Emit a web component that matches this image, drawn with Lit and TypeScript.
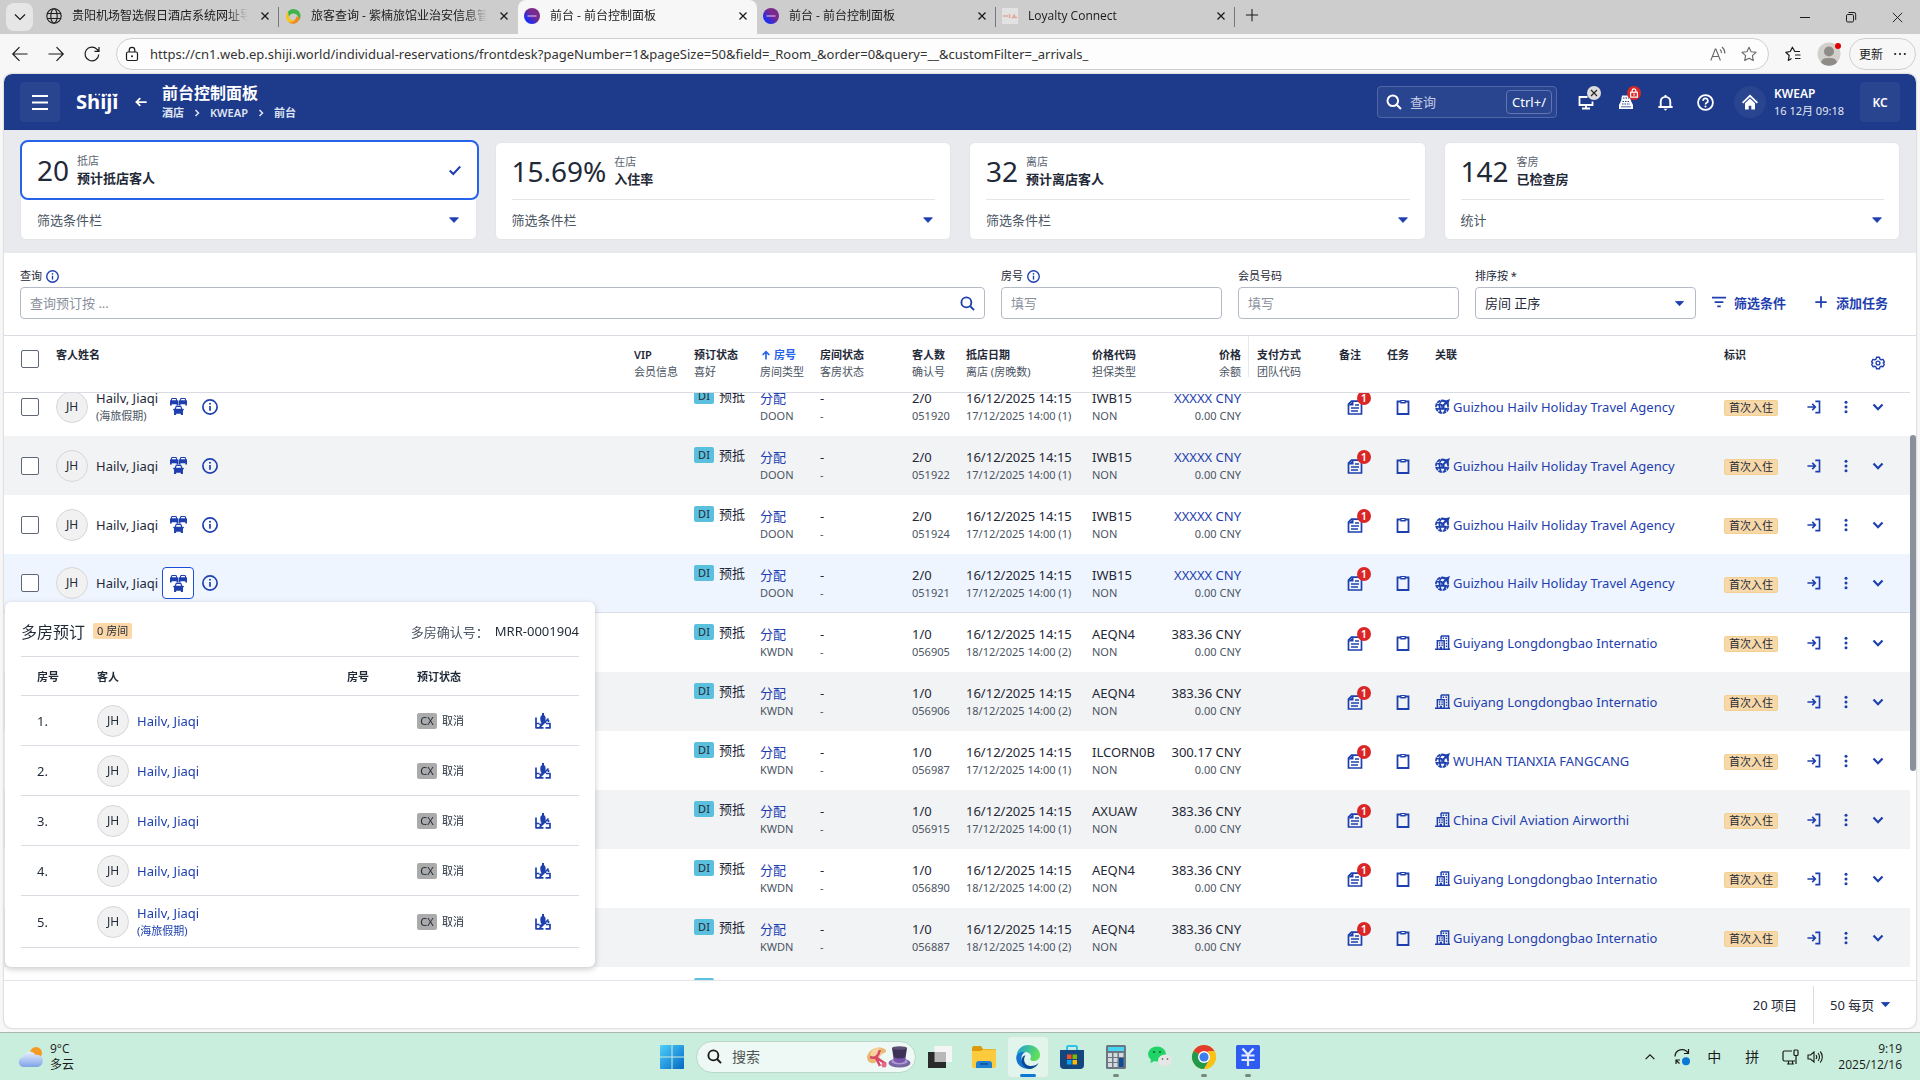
import { LitElement, html, css, svg, nothing, type TemplateResult } from "lit";
import { customElement, property, query } from "lit/decorators.js";
import { classMap } from "lit/directives/class-map.js";

const glyphs: Record<string, TemplateResult> = {
  chevron: svg`<path d="M3 5.5 8 10.5 13 5.5" fill="none" stroke="currentColor" stroke-width="1.2"/>`,
  chevronBold: svg`<path d="M3.5 5.5 8 10.2 12.5 5.5" fill="none" stroke="currentColor" stroke-width="2.2"/>`,
  crumb: svg`<path d="M6 4 10 8 6 12" fill="none" stroke="currentColor" stroke-width="2"/>`,
  globe: svg`<g fill="none" stroke="currentColor" stroke-width="1.1"><circle cx="8" cy="8" r="7.2"/><ellipse cx="8" cy="8" rx="3.2" ry="7.2"/><path d="M1.4 5.5h13.2M1.4 10.5h13.2"/></g>`,
  swirl: svg`<path d="M3.500 3A7.200 7.200 0 0 1 15.500 7c.2 2-.4 4-1.500 5.500C14 9 12 5.500 8.500 5.500 6 5.500 4.500 7 4.200 9 2.500 7 2.500 5 3.500 3Z" fill="#3db54a"/><path d="M14.500 9c0 4-3 6.800-6.500 6.800-2 0-3.500-.8-4.800-2 4 .8 7.300-1 8.300-5.300z" fill="#f08a1c"/><path d="M2.800 3.500C.2 6.500.2 11 3.200 13.800c2.500.9 5 .4 6.500-1.300C6.500 12.500 3.500 10 3.500 7c0-1.500-.3-2.500-.7-3.500Z" fill="#f6c524"/>`,
  shijiDot: svg`<defs><linearGradient id="sd" x1="0" y1="1" x2="1" y2="0"><stop offset=".2" stop-color="#1b2df5"/><stop offset=".6" stop-color="#7a2a8c"/></linearGradient></defs><circle cx="8" cy="8" r="8" fill="url(#sd)"/><path d="M3.500 8h9" stroke="#c9a8e0" stroke-width="1.300"/>`,
  loyalty: svg`<rect width="16" height="16" fill="#e2e2e2"/><path d="M1 8h5M7.500 6v4M9.500 9.500h2l.5-3 1 3h2" stroke="#e58b80" stroke-width="1.500" fill="none" opacity=".7"/>`,
  close: svg`<path d="M4 4l8 8M12 4l-8 8" stroke="currentColor" stroke-width="1.500"/>`,
  closeThin: svg`<path d="M3 3l10 10M13 3 3 13" stroke="currentColor" stroke-width="1"/>`,
  plusThin: svg`<path d="M8 1v14M1 8h14" stroke="currentColor" stroke-width="1.200"/>`,
  plus: svg`<path d="M8 1.500v13M1.500 8h13" stroke="currentColor" stroke-width="2"/>`,
  minimize: svg`<path d="M3 8.500h10" stroke="currentColor" stroke-width="1"/>`,
  restore: svg`<g fill="none" stroke="currentColor" stroke-width="1"><rect x="3.500" y="5.500" width="7" height="7.500" rx="1.200"/><path d="M5.500 3.500H11a1.700 1.700 0 0 1 1.700 1.700V11"/></g>`,
  back: svg`<path d="M15.500 8H1M7.500 1.200 .8 8l6.700 6.800" fill="none" stroke="currentColor" stroke-width="1.200"/>`,
  forward: svg`<path d="M.5 8H15M8.500 1.200 15.200 8l-6.700 6.800" fill="none" stroke="currentColor" stroke-width="1.200"/>`,
  reload: svg`<path d="M14.800 8.500A6.900 6.900 0 1 1 13 3.300L15 5.200M15 1v4.400h-4.500" fill="none" stroke="currentColor" stroke-width="1.200"/>`,
  lock: svg`<g fill="none" stroke="currentColor" stroke-width="1.200"><rect x="2.500" y="6" width="11" height="8.500" rx="1.500"/><path d="M5.200 6V4.200a2.800 2.800 0 0 1 5.600 0V6"/></g><circle cx="8" cy="10.200" r="1" fill="currentColor"/>`,
  readAloud: svg`<g fill="none" stroke="currentColor" stroke-width="1.100"><path d="M.8 14.500 5.300 3h.6l4.500 11.500M2.500 10.500h6.200M10 3.500c1 .8 1.500 2 1.500 3.500M12 1c1.800 1.500 2.900 4 2.900 6.500"/></g>`,
  star: svg`<path d="M8 1.200l2.100 4.500 4.900.6-3.600 3.400.9 4.900L8 12.200l-4.300 2.400.9-4.900L1 6.300l4.900-.6z" fill="none" stroke="currentColor" stroke-width="1.100" stroke-linejoin="round"/>`,
  favs: svg`<path d="M15 5.500H9.800L7.400 1.200 5.300 5.500.8 6.300l3.400 3.200-.9 4.900 3.200-1.800M10 9h5.500M10 12.500h5.500" fill="none" stroke="currentColor" stroke-width="1.200" stroke-linejoin="round"/>`,
  dots: svg`<g fill="currentColor"><circle cx="2.500" cy="8" r="1.200"/><circle cx="8" cy="8" r="1.200"/><circle cx="13.500" cy="8" r="1.200"/></g>`,
  kebab: svg`<g fill="currentColor"><circle cx="8" cy="1.800" r="2"/><circle cx="8" cy="8" r="2"/><circle cx="8" cy="14.200" r="2"/></g>`,
  menu: svg`<path d="M0 2h16M0 8.500h16M0 15h16" stroke="currentColor" stroke-width="2"/>`,
  arrowLeft: svg`<path d="M14.500 8H3M7.200 3.500 2.700 8l4.500 4.500" fill="none" stroke="currentColor" stroke-width="2"/>`,
  arrowUp: svg`<path d="M8 14V4M3.500 8 8 3.500 12.500 8" fill="none" stroke="currentColor" stroke-width="2.200"/>`,
  search: svg`<g fill="none" stroke="currentColor" stroke-width="2"><circle cx="6.800" cy="6.800" r="5.300"/><path d="M10.700 10.700 15 15"/></g>`,
  monitor: svg`<path d="M9.500 3H1.500v8h13V7.500M8 11v3M4 14.500h8" fill="none" stroke="currentColor" stroke-width="1.800"/>`,
  register: svg`<path d="M4 1.500h8l.8 5L15 11v4H1v-4l2.200-4.500z" fill="currentColor"/><path d="M5 4h6M4.500 7.500h7M4 10h8" stroke="#1e3a8a" stroke-width="1.200" stroke-dasharray="1.500 1"/><path d="M3 12.800h10" stroke="#1e3a8a" stroke-width=".8"/>`,
  bell: svg`<path d="M8 1v1.500M3.500 12V7.200a4.500 4.500 0 0 1 9 0V12M1.300 12.200h13.400" fill="none" stroke="currentColor" stroke-width="1.800"/><path d="M6.200 13.800h3.600L8 15.800z" fill="currentColor"/>`,
  help: svg`<circle cx="8" cy="8" r="7" fill="none" stroke="currentColor" stroke-width="1.700"/><path d="M5.800 6.500A2.200 2.200 0 1 1 9 8.300c-.7.400-1 .7-1 1.500" fill="none" stroke="currentColor" stroke-width="1.600"/><circle cx="8" cy="11.800" r="1" fill="currentColor"/>`,
  home: svg`<path d="M8 .5 0 8.300l1.200 1.200L8 3l6.800 6.500L16 8.300zM3 9.300V15.500h3.700v-3.800h2.600v3.800H13V9.300L8 4.600z" fill="currentColor"/>`,
  badgeLock: svg`<g fill="none" stroke="#fff" stroke-width="1.600"><rect x="3.500" y="7" width="9" height="6.500"/><path d="M5.500 7V5a2.500 2.500 0 0 1 5 0v2"/></g><path d="M8 8.500v3" stroke="#fff" stroke-width="1.600"/>`,
  check: svg`<path d="M2 8.500 6 12.500 14 4" fill="none" stroke="currentColor" stroke-width="2.300"/>`,
  caret: svg`<path d="M3 5.500h10L8 10.800z" fill="currentColor" stroke="currentColor" stroke-width="1"/>`,
  info: svg`<circle cx="8" cy="8" r="7.100" fill="none" stroke="currentColor" stroke-width="1.700"/><path d="M8 7v4.800" stroke="currentColor" stroke-width="1.700"/><circle cx="8" cy="4.800" r="1" fill="currentColor"/>`,
  filter: svg`<path d="M0 3h16M3 8h10M6 13h4" stroke="currentColor" stroke-width="2"/>`,
  gear: svg`<path d="M6.300 1.500h3.400l.5 2 1.500.9 2-.6 1.600 2.900-1.400 1.300 1.400 1.400-1.600 2.900-2-.6-1.500.9-.5 2H6.300l-.5-2-1.500-.9-2 .6L.7 9.400 2.100 8 .7 6.700l1.600-2.900 2 .6 1.500-.9z" fill="none" stroke="currentColor" stroke-width="1.600" stroke-linejoin="round"/><circle cx="8" cy="8" r="2.200" fill="none" stroke="currentColor" stroke-width="1.500"/>`,
  group: svg`<g fill="currentColor"><path d="M1.500 0h4.500l.9 2 .9.700V7H6.200V5.800H1.600V7H0V2.700L.6 2z"/><path d="M10 0h4.500l.9 2 .6.700V7h-1.600V5.800H9.800V7H8.200V2.700l.9-.7z"/><path d="M5.500 7.300h5l1.100 2.700 1.400.3v1l-.8.5V16h-2v-1.200H5.800V16h-2v-4.200L3 11.300v-1L4.400 10z"/></g><g fill="#fff"><path d="M2.200 1h3.100l.5 1.200H1.700zM10.700 1h3.100l.5 1.200h-4.100zM6.200 8.400h3.600l.6 1.600H5.600z"/></g>`,
  notes: svg`<path d="M4.500 2.200H14.500V15H1.500V5.200z" fill="none" stroke="currentColor" stroke-width="1.700"/><path d="M1 6.500h5.500V2z" fill="currentColor"/><path d="M4 9h8M4 12h7M8 6h4" stroke="currentColor" stroke-width="1.400"/>`,
  clipboard: svg`<path d="M2.500 2.500h11v12.500h-11z" fill="none" stroke="currentColor" stroke-width="1.800"/><path d="M5.300 1h5.400v3.500H5.300z" fill="currentColor"/><path d="M6.500 2.500h3" stroke="#fff" stroke-width="1"/>`,
  agency: svg`<g fill="none" stroke="currentColor"><path d="M10.500 2A6.800 6.800 0 1 0 14.500 9.500" stroke-width="1.800" stroke-dasharray="4 .8"/><path d="M7 2C4 4 3.800 10 6.500 14.500M1.500 6.200h6M1.500 10.500h12M9.500 14.500c1.300-1.300 1.800-3 2-5M6 8.500h4" stroke-width="1.700"/></g><path d="M16 0l-1.300 3.700 .2 5-1.400.9-1.400-4.200-2.200 2.100.1 2.300-1.200.6-1-2.400-2.300-1 .8-1.200 2.100.1 2.100-2.200-4.200-1.400.9-1.300 5 .2z" fill="currentColor"/>`,
  company: svg`<path d="M6.500 1h8V15M6.500 1v4M2.500 15V6h7.300v9M0 15.200h16" fill="none" stroke="currentColor" stroke-width="1.600"/><path d="M4.200 8.500h1.500M6.800 8.500h1.500M4.200 11h1.500M6.800 11h1.500M8.200 3.500h1.500M11 3.500h1.700M11.500 6.200h1.500M11.500 9h1.500M11.500 12h1.500" stroke="currentColor" stroke-width="1.500" fill="none"/><path d="M5 12.500h2.500V15H5z" fill="currentColor"/>`,
  checkIn: svg`<path d="M9.500 1.500h4.800v13H9.500M.5 8h9M6 4.500 9.500 8 6 11.500" fill="none" stroke="currentColor" stroke-width="1.900"/>`,
  restoreGuest: svg`<path d="M7 0h2v2.500h.8c1 1.500 1 3.500.5 5.500L8.500 11 6 9.500C5 6.500 5 4.500 6 2.500h1z" fill="currentColor"/><path d="M1 4.500v11M1 10.500h3.500M1 14.800h7.500M13.500 5.500 4.500 14.500M10.500 14.800 15.500 14.800M11 10.500h4v5M4.500 12l6.500-3M13.500 7v2" stroke="currentColor" stroke-width="1.700" fill="none"/>`,
  trayUp: svg`<path d="M3 10.500 8 5.500 13 10.500" fill="none" stroke="currentColor" stroke-width="1.400"/>`,
  sync: svg`<path d="M1 7.500A7 7 0 0 1 14 4M14.500 0v4.500H10M2 15v-4h4M2.200 11.500 5.500 14.500" fill="none" stroke="currentColor" stroke-width="1.200"/><circle cx="12" cy="12.200" r="4" fill="#0a78d4"/>`,
  network: svg`<path d="M10 2H2.500A1.500 1.500 0 0 0 1 3.500v7A1.500 1.500 0 0 0 2.500 12H13M5 15h7M6.500 12v3M10.500 12v3M14 7v8" fill="none" stroke="currentColor" stroke-width="1.200"/><rect x="12" y="1" width="4" height="5.500" rx="1" fill="none" stroke="currentColor" stroke-width="1.200"/>`,
  volume: svg`<path d="M1 6h2.500L7 3v10L3.500 10H1zM9 6c.8 1 .8 3 0 4M11 4.200c2 2 2 5.600 0 7.600M13.200 2.500c2.800 3 2.800 8 0 11" fill="none" stroke="currentColor" stroke-width="1.100"/>`,
};

const icon = (name: string, size = 16) =>
  html`<svg class="icon" width=${size} height=${size} viewBox="0 0 16 16" aria-hidden="true">${glyphs[name]}</svg>`;

const shared = css`
  :host { box-sizing: border-box; }
  *, *::before, *::after { box-sizing: border-box; }
  button, input, select { font: inherit; color: inherit; }
  button { border: 0; background: none; padding: 0; margin: 0; display: inline-flex; align-items: center; justify-content: center; cursor: pointer; }
  a { text-decoration: none; color: inherit; }
  .icon { display: block; flex: none; overflow: visible; }
`;

interface Tab { icon: string; title: string; active?: boolean; divider?: boolean }
const tabs: Tab[] = [
  { icon: "globe", title: "贵阳机场智选假日酒店系统网址导航", divider: true },
  { icon: "swirl", title: "旅客查询 - 紫楠旅馆业治安信息管理" },
  { icon: "shijiDot", title: "前台 - 前台控制面板", active: true },
  { icon: "shijiDot", title: "前台 - 前台控制面板", divider: true },
  { icon: "loyalty", title: "Loyalty Connect", divider: true },
];

@customElement("browser-bar")
class BrowserBar extends LitElement {
  static styles = [shared, css`
    :host { display: block; color: #1b1b1b; font-family: "Open Sans", "Noto Sans CJK SC", sans-serif; }
    .tabs { display: flex; height: 34px; background: #cdcdcd; padding-left: 6px; }
    .tablist { width: 27px; height: 28px; margin: 3px 7px 0 0; border-radius: 8px; background: #e6e6e6; }
    .tab { width: 239px; display: flex; align-items: center; gap: 10px; padding: 0 7px 8px 6px; font-size: 12px; line-height: 18px; position: relative; padding-top: 6px; }
    .tab.active { background: #f7f7f7; border-radius: 8px 8px 0 0; }
    .tab.divider::after { content: ""; position: absolute; right: 0; top: 7px; height: 20px; width: 1px; background: #777; }
    .title { flex: 1; white-space: nowrap; overflow: hidden; mask-image: linear-gradient(90deg, #000 88%, transparent); }
    .add { width: 34px; height: 30px; }
    .window { margin-left: auto; display: flex; }
    .window button { width: 46px; height: 34px; }
    .tools { display: flex; align-items: center; height: 40px; background: #f7f7f7; padding: 0 4px 0 2px; }
    .nav { width: 36px; height: 32px; }
    .address { flex: 1; display: flex; align-items: center; height: 32px; margin-left: 6px; border: 1px solid #cfcfcf; border-radius: 16px; background: #fdfdfd; padding: 0 8px 0 7px; gap: 10px; }
    .url { flex: 1; min-width: 0; border: 0; background: none; outline: 0; padding: 0; font-family: "Noto Sans", sans-serif; font-size: 13px; color: #333; }
    .grey { color: #666; }
    .address button { width: 21px; }
    .fav { width: 48px; height: 32px; }
    .avatar { width: 24px; height: 24px; }
    .update { height: 32px; margin-left: 8px; border: 1px solid #cfcfcf; border-radius: 16px; gap: 10px; padding: 0 8px 0 9px; font-size: 12px; }
  `];

  render() {
    return html`
      <div class="tabs" role="tablist">
        <button class="tablist" aria-label="标签页">${icon("chevron", 16)}</button>
        ${tabs.map((t) => html`
          <div class=${classMap({ tab: true, active: !!t.active, divider: !!t.divider })} role="tab">
            ${icon(t.icon)}<span class="title">${t.title}</span>
            <button aria-label="关闭">${icon("close", 14)}</button>
          </div>`)}
        <button class="add" aria-label="新建">${icon("plusThin", 14)}</button>
        <div class="window">
          <button aria-label="最小化">${icon("minimize")}</button>
          <button aria-label="还原">${icon("restore")}</button>
          <button aria-label="关闭">${icon("closeThin", 15)}</button>
        </div>
      </div>
      <div class="tools">
        <button class="nav" aria-label="后退">${icon("back")}</button>
        <button class="nav" aria-label="前进">${icon("forward")}</button>
        <button class="nav" aria-label="刷新">${icon("reload")}</button>
        <div class="address">
          ${icon("lock")}
          <input class="url" aria-label="地址" value="https://cn1.web.ep.shiji.world/individual-reservations/frontdesk?pageNumber=1&pageSize=50&field=_Room_&order=0&query=__&customFilter=_arrivals_" />
          <button class="grey" aria-label="朗读">${icon("readAloud")}</button>
          <button class="grey" aria-label="收藏">${icon("star")}</button>
        </div>
        <button class="fav" aria-label="收藏夹">${icon("favs")}</button>
        <button aria-label="用户"><svg class="icon avatar" viewBox="0 0 24 24"><circle cx="12" cy="12" r="11.500" fill="#d2d0cd"/><circle cx="12" cy="9.500" r="5" fill="#8f8b87"/><path d="M4 20.500c1-4 4-4.500 8-4.500s7 .5 8 4.500a11.500 11.500 0 0 1-16 0z" fill="#8f8b87"/><circle cx="21" cy="4" r="3" fill="#e00000"/></svg></button>
        <button class="update">更新 ${icon("dots", 14)}</button>
      </div>`;
  }
}

@customElement("app-header")
class AppHeader extends LitElement {
  static styles = [shared, css`
    :host { display: flex; align-items: center; height: 56px; padding: 0 16px; background: #1e3a8a; color: #fff; border-radius: 8px 8px 0 0; }
    .tile { width: 40px; height: 40px; border-radius: 4px; background: #2a4590; font-size: 12px; font-weight: 600; }
    .logo { margin: 0 16px 0 16px; width: 42px; position: relative; font: 700 20px/40px "Open Sans", sans-serif; }
    .logodots { position: absolute; left: 18px; top: 11px; }
    .titles { margin-left: 14px; display: flex; flex-direction: column; gap: 2px; }
    h1 { margin: 0; font-size: 16px; line-height: 20px; font-weight: 700; }
    .crumbs { display: flex; align-items: center; gap: 7px; font-size: 11px; line-height: 16px; font-weight: 600; color: #dfe5f4; }
    .search { margin-left: auto; display: flex; align-items: center; gap: 8px; width: 180px; height: 32px; border: 1px solid #5068a8; border-radius: 4px; background: #2a4590; padding: 0 4px 0 8px; }
    .search input { flex: 1; min-width: 0; border: 0; background: none; outline: 0; padding: 0; font-size: 13px; }
    .search input::placeholder { color: #c3cce4; }
    .key { height: 24px; border: 1px solid #5f76b0; border-radius: 4px; padding: 0 5px; font-size: 13px; line-height: 22px; }
    .actions { display: flex; margin-left: 9px; }
    .actions button { width: 40px; height: 40px; position: relative; }
    .badge { position: absolute; right: 5px; top: 4px; width: 14px; height: 14px; border-radius: 50%; display: grid; place-items: center; background: #dcdcdc; color: #222; }
    .badge.red { background: #dc2626; }
    .home { width: 32px; height: 32px; border-radius: 50%; background: #2a4590; display: grid; place-items: center; margin: 0 8px; }
    .who { margin-right: 16px; display: flex; flex-direction: column; gap: 1px; }
    .hotel { font-size: 12px; line-height: 17px; font-weight: 600; }
    .date { font-size: 11px; line-height: 16px; color: #e2e7f4; }
  `];

  render() {
    return html`
      <button class="tile" aria-label="菜单">${icon("menu")}</button>
      <div class="logo">Shiji<svg class="icon logodots" width="26" height="3" viewBox="0 0 26 3"><path d="M1 1.500h24" stroke="#fff" stroke-width="1.500" stroke-dasharray="1.500 2"/></svg></div>
      <button aria-label="返回">${icon("arrowLeft", 14)}</button>
      <div class="titles">
        <h1>前台控制面板</h1>
        <nav class="crumbs"><a href="#">酒店</a>${icon("crumb", 12)}<a href="#">KWEAP</a>${icon("crumb", 12)}<a href="#">前台</a></nav>
      </div>
      <label class="search">${icon("search", 16)}<input type="search" placeholder="查询" aria-label="查询" /><span class="key">Ctrl+/</span></label>
      <div class="actions">
        <button aria-label="连接">${icon("monitor")}<span class="badge">${icon("close", 12)}</span></button>
        <button aria-label="收银">${icon("register")}<span class="badge red">${icon("badgeLock", 12)}</span></button>
        <button aria-label="通知">${icon("bell", 17)}</button>
        <button aria-label="帮助">${icon("help", 17)}</button>
      </div>
      <span class="home">${icon("home")}</span>
      <div class="who"><span class="hotel">KWEAP</span><span class="date">16 12月 09:18</span></div>
      <button class="tile">KC</button>`;
  }
}

@customElement("stat-card")
class StatCard extends LitElement {
  @property() value = "";
  @property() over = "";
  @property() label = "";
  @property() foot = "";
  @property({ type: Boolean }) selected = false;

  static styles = [shared, css`
    :host { display: block; background: #fff; border: 1px solid #e4e5e9; border-radius: 6px; color: #1f2937; }
    .top { width: 100%; height: 56px; padding: 0 16px; justify-content: flex-start; gap: 8px; text-align: left; }
    .top.selected { width: calc(100% + 4px); height: 60px; margin: -3px -3px -1px -1px; padding: 0 15px; border: 2px solid #2563eb; border-radius: 8px; background: #fff; position: relative; }
    .value { font-size: 28px; line-height: 38px; font-weight: 400; }
    .names { display: flex; flex-direction: column; flex: 1; }
    .over { font-size: 11px; line-height: 16px; color: #5b6472; }
    .label { font-size: 13px; line-height: 18px; font-weight: 600; }
    .foot { width: calc(100% - 31px); height: 40px; margin: 0 15px 0 16px; justify-content: space-between; border-top: 1px solid #e4e5e9; font-size: 13px; color: #4b5563; }
    .foot.selected { border-color: transparent; }
    .icon { color: #1e40af; }
  `];

  render() {
    const s = this.selected;
    return html`
      <button class=${classMap({ top: true, selected: s })}>
        <span class="value">${this.value}</span>
        <span class="names"><span class="over">${this.over}</span><span class="label">${this.label}</span></span>
        ${s ? icon("check", 14) : nothing}
      </button>
      <button class=${classMap({ foot: true, selected: s })}>${this.foot}${icon("caret", 14)}</button>`;
  }
}

interface Row { conf: string; guests: string; room: string; rate: string; price: string; nights: number; partner: string; agency: boolean; sub?: string; named?: boolean; hover?: boolean }
const AGENCY = "Guizhou Hailv Holiday Travel Agency";
const HOTEL = "Guiyang Longdongbao Internatio";
const hailv = (conf: string, extra: Partial<Row> = {}): Row => ({ conf, guests: "2/0", room: "DOON", rate: "IWB15", price: "XXXXX CNY", nights: 1, partner: AGENCY, agency: true, named: true, ...extra });
const kwdn = (conf: string, extra: Partial<Row> = {}): Row => ({ conf, guests: "1/0", room: "KWDN", rate: "AEQN4", price: "383.36 CNY", nights: 2, partner: HOTEL, agency: false, ...extra });
const rows: Row[] = [
  hailv("051920", { sub: "(海旅假期)" }),
  hailv("051922"),
  hailv("051924"),
  hailv("051921", { hover: true }),
  kwdn("056905"),
  kwdn("056906"),
  kwdn("056987", { rate: "ILCORN0B", price: "300.17 CNY", nights: 1, partner: "WUHAN TIANXIA FANGCANG", agency: true }),
  kwdn("056915", { rate: "AXUAW", nights: 1, partner: "China Civil Aviation Airworthi" }),
  kwdn("056890"),
  kwdn("056887"),
  kwdn("056888"),
];

@customElement("reservation-table")
class ReservationTable extends LitElement {
  @query(".scroller") scroller!: HTMLElement;

  firstUpdated() {
    this.scroller.scrollTop = 16;
  }

  static styles = [shared, css`
    :host { display: block; position: relative; min-height: 0; flex: 1; border-top: 1px solid #d9dce3; color: #1f2937; }
    .scroller { height: 100%; overflow: hidden; margin-right: 6px; }
    .thumb { position: absolute; right: 0; top: 99px; width: 6px; height: 336px; border-radius: 3px; background: #8a909c; }
    table { border-collapse: separate; border-spacing: 0; width: 100%; }
    .grid { table-layout: fixed; }
    .c-check { width: 44px; } .c-vip { width: 60px; } .c-status { width: 66px; } .c-room { width: 60px; } .c-rs { width: 92px; }
    .c-guests { width: 54px; } .c-date { width: 126px; } .c-rate { width: 76px; } .c-price { width: 89px; } .c-pay { width: 82px; }
    .c-ic { width: 48px; } .c-rel { width: 289px; } .c-tag { width: 82px; } .c-act { width: 112px; }
    .grid > thead > tr > th { position: sticky; top: 0; z-index: 1; height: 57px; background: #fff; border-bottom: 1px solid #d9dce3; font-size: 11px; line-height: 17px; text-align: left; vertical-align: top; padding: 10px 8px 0; font-weight: 400; color: #4b5563; white-space: nowrap; }
    th strong { display: block; font-weight: 600; color: #1f2937; }
    th .sorted { color: #2563eb; display: flex; align-items: center; gap: 2px; }
    .grid > thead > tr > th.price::after { content: ""; position: absolute; right: 0; top: 0; height: 41px; width: 1px; background: #e8eaee; }
    .grid > tbody > tr > td { height: 59px; padding: 11px 8px 0; vertical-align: top; font-size: 13px; line-height: 20px; white-space: nowrap; }
    .grid > tbody > tr > td.mid { padding-top: 0; padding-bottom: 0; vertical-align: middle; }
    .grid > thead > tr > th.all { padding: 14px 0 0 8px; }
    .grid > thead > tr > th.set { padding: 20px 8px 0; }
    tr.even > td { background: #f2f3f5; }
    tr.hover > td { background: #eef5ff; border-bottom: 1px solid #d9dee8; }
    small { display: block; font-size: 11px; line-height: 16px; color: #4b5563; }
    .price { text-align: right !important; }
    input[type="checkbox"] { appearance: none; display: block; width: 18px; height: 18px; margin: 0 0 0 9px; border: 1px solid #5f6776; border-radius: 2px; background: #fff; }
    .guest { display: flex; align-items: center; }
    .face { width: 32px; height: 32px; border-radius: 50%; border: 1px solid #d6d7da; background: #f1f1f2; display: grid; place-items: center; font-size: 12px; line-height: 18px; margin-right: 8px; flex: none; }
    .who { line-height: 18px; }
    .who small { line-height: 18px; }
    .btn { width: 32px; height: 32px; border: 1px solid transparent; border-radius: 4px; color: #1e40af; }
    .btn.on { border-color: #1d4ed8; background: #fff; }
    .guest .btn:first-of-type { margin-left: 4px; }
    .state { display: flex; gap: 5px; }
    .code { height: 16px; padding: 0 4px; border-radius: 2px; background: #5bc0de; font-size: 11px; line-height: 16px; min-width: 20px; text-align: center; }
    .state span:last-child { line-height: 16px; }
    .code.grey { background: #ababab; padding: 0 3px; }
    .link { color: #1e40af; }
    .rel { display: flex; align-items: center; gap: 3px; color: #1e40af; }
    .iconcell { position: relative; width: 18px; color: #1e40af; margin-left: 8px; }
    .count { position: absolute; left: 10px; top: -8px; width: 14px; height: 14px; border-radius: 50%; background: #dc2626; color: #fff; font-size: 11px; line-height: 14px; font-weight: 600; text-align: center; }
    .mark { display: inline-block; height: 16px; padding: 0 4px; border: 1px solid #f4cf92; border-radius: 2px; background: #f7d9a9; font-size: 11px; line-height: 14px; vertical-align: middle; }
    .acts { display: flex; }
    .acts .btn { margin-left: -8px; margin-right: 8px; }
    .cog { width: 32px; margin-left: 56px; color: #1e40af; }

    .popover { position: absolute; left: 1px; top: 266px; width: 590px; height: 365px; z-index: 2; padding: 4px 16px; background: #fff; border-radius: 6px; box-shadow: 0 2px 6px rgba(0, 0, 0, .22); }
    .phead { display: flex; align-items: center; height: 50px; font-size: 13px; color: #4b5563; }
    .phead h2 { margin: 0 8px 0 0; font-size: 16px; font-weight: 400; color: #1f2937; }
    .phead b { font-weight: 400; color: #1f2937; margin-left: 6px; }
    .zero { height: 16px; padding: 0 4px; background: #fdd7a8; border-radius: 2px; font-size: 11px; line-height: 16px; color: #1f2937; margin-right: auto; }
    .rooms { table-layout: fixed; }
    .rooms th { height: 40px; border-top: 1px solid #d9dce3; border-bottom: 1px solid #d9dce3; text-align: left; font-size: 11px; font-weight: 600; padding: 0; }
    .rooms td { height: 50px; border-bottom: 1px solid #d9dce3; padding: 0; font-size: 13px; vertical-align: middle; }
    .rooms th:first-child, .rooms td:first-child { padding-left: 16px; }
    .rooms tr:last-child td { height: 52px; }
    .rooms .state { align-items: center; font-size: 11px; }
    .rooms small { color: inherit; }
    .rooms button { display: flex; }
    .p1 { width: 76px; } .p3 { width: 70px; } .p4 { width: 118px; } .p5 { width: 44px; }
  `];

  private row(r: Row, i: number) {
    return html`<tr class=${classMap({ even: i % 2 === 1 && !r.hover, hover: !!r.hover })}>
      <td class="mid"><input type="checkbox" aria-label="选择 ${r.conf}" /></td>
      <td class="mid">${r.named ? html`<div class="guest"><span class="face">JH</span>
        <span class="who">Hailv, Jiaqi${r.sub ? html`<small>${r.sub}</small>` : nothing}</span>
        <button class=${classMap({ btn: true, on: !!r.hover })} aria-label="多房预订">${icon("group", 17)}</button>
        <button class="btn" aria-label="详情">${icon("info")}</button></div>` : nothing}</td>
      <td></td>
      <td><div class="state"><span class="code">DI</span><span>预抵</span></div></td>
      <td><a class="link" href="#">分配</a><small>${r.room}</small></td>
      <td>-<small>-</small></td>
      <td>${r.guests}<small>${r.conf}</small></td>
      <td>16/12/2025 14:15<small>${16 + r.nights}/12/2025 14:00 (${r.nights})</small></td>
      <td>${r.rate}<small>NON</small></td>
      <td class="price">${r.named ? html`<a class="link" href="#">${r.price}</a>` : r.price}<small>0.00 CNY</small></td>
      <td></td>
      <td class="mid"><div class="iconcell">${icon("notes")}<span class="count">1</span></div></td>
      <td class="mid"><div class="iconcell">${icon("clipboard")}</div></td>
      <td class="mid"><a class="rel" href="#">${icon(r.agency ? "agency" : "company", 15)}${r.partner}</a></td>
      <td class="mid"><span class="mark">首次入住</span></td>
      <td class="mid"><div class="acts">
        <button class="btn" aria-label="入住">${icon("checkIn", 14)}</button><button class="btn" aria-label="更多">${icon("kebab", 12)}</button><button class="btn" aria-label="展开">${icon("chevronBold", 16)}</button>
      </div></td>
    </tr>`;
  }

  render() {
    return html`
      <div class="scroller"><table class="grid">
        <colgroup><col class="c-check" /><col /><col class="c-vip" /><col class="c-status" /><col class="c-room" /><col class="c-rs" /><col class="c-guests" /><col class="c-date" /><col class="c-rate" /><col class="c-price" /><col class="c-pay" /><col class="c-ic" /><col class="c-ic" /><col class="c-rel" /><col class="c-tag" /><col class="c-act" /></colgroup>
        <thead><tr>
          <th class="all"><input type="checkbox" aria-label="全选" /></th>
          <th><strong>客人姓名</strong></th>
          <th><strong>VIP</strong>会员信息</th>
          <th><strong>预订状态</strong>喜好</th>
          <th><strong class="sorted">${icon("arrowUp", 12)}房号</strong>房间类型</th>
          <th><strong>房间状态</strong>客房状态</th>
          <th><strong>客人数</strong>确认号</th>
          <th><strong>抵店日期</strong>离店 (房晚数)</th>
          <th><strong>价格代码</strong>担保类型</th>
          <th class="price"><strong>价格</strong>余额</th>
          <th><strong>支付方式</strong>团队代码</th>
          <th><strong>备注</strong></th>
          <th><strong>任务</strong></th>
          <th><strong>关联</strong></th>
          <th><strong>标识</strong></th>
          <th class="set"><button class="cog" aria-label="设置">${icon("gear", 14)}</button></th>
        </tr></thead>
        <tbody>${rows.map((r, i) => this.row(r, i))}</tbody>
      </table></div>
      <div class="thumb"></div>
      <section class="popover">
        <div class="phead"><h2>多房预订</h2><span class="zero">0 房间</span>多房确认号： <b>MRR-0001904</b></div>
        <table class="rooms">
          <colgroup><col class="p1" /><col /><col class="p3" /><col class="p4" /><col class="p5" /></colgroup>
          <thead><tr><th>房号</th><th>客人</th><th>房号</th><th>预订状态</th><th></th></tr></thead>
          <tbody>${[1, 2, 3, 4, 5].map((n) => html`<tr>
            <td>${n}.</td>
            <td><div class="guest"><span class="face">JH</span><a class="link who" href="#">Hailv, Jiaqi${n === 5 ? html`<small>(海旅假期)</small>` : nothing}</a></div></td>
            <td></td>
            <td><div class="state"><span class="code grey">CX</span><span>取消</span></div></td>
            <td><button class="link" aria-label="恢复">${icon("restoreGuest")}</button></td>
          </tr>`)}</tbody>
        </table>
      </section>`;
  }
}

@customElement("filter-bar")
class FilterBar extends LitElement {
  static styles = [shared, css`
    :host { display: flex; align-items: flex-end; gap: 16px; padding: 14px 28px 16px 16px; background: #fff; color: #1f2937; }
    .field { width: 221px; display: flex; flex-direction: column; gap: 2px; }
    .wide { flex: 1; }
    label { display: flex; align-items: center; gap: 4px; font-size: 11px; line-height: 18px; }
    .box { display: flex; align-items: center; height: 32px; border: 1px solid #b4bac6; border-radius: 4px; padding: 0 9px; }
    .box input, .box select { flex: 1; min-width: 0; height: 30px; border: 0; outline: 0; background: none; padding: 0; font-size: 13px; }
    .box select { appearance: none; }
    .box input::placeholder { color: #8a909c; }
    .icon { color: #1e40af; }
    .text { height: 34px; gap: 8px; font-size: 13px; font-weight: 600; color: #1e40af; }
    .gap { margin-left: 12px; }
  `];

  render() {
    return html`
      <div class="field wide"><label for="q">查询 ${icon("info", 13)}</label><div class="box"><input id="q" placeholder="查询预订按 ..." />${icon("search", 15)}</div></div>
      <div class="field"><label for="room">房号 ${icon("info", 13)}</label><div class="box"><input id="room" placeholder="填写" /></div></div>
      <div class="field"><label for="member">会员号码</label><div class="box"><input id="member" placeholder="填写" /></div></div>
      <div class="field"><label for="sort">排序按 *</label><div class="box"><select id="sort"><option>房间 正序</option></select>${icon("caret", 13)}</div></div>
      <button class="text">${icon("filter", 14)}筛选条件</button>
      <button class="text gap">${icon("plus", 14)}添加任务</button>`;
  }
}

@customElement("task-bar")
class TaskBar extends LitElement {
  static styles = [shared, css`
    :host { display: grid; grid-template-columns: 1fr auto 1fr; align-items: center; height: 48px; background: #c9eedd; border-top: 1px solid #a9b9b1; color: #1a1a1a; font-size: 12px; line-height: 16px; font-family: "Open Sans", "Noto Sans CJK SC", sans-serif; }
    .weather { display: flex; align-items: center; gap: 6px; padding-left: 18px; }
    .apps { display: flex; align-items: center; gap: 4px; }
    .apps button { width: 40px; height: 40px; border-radius: 4px; position: relative; }
    .apps .current { background: #e2f5ec; box-shadow: 0 0 0 1px #d3e8de; }
    .apps .run::after { content: ""; position: absolute; bottom: 0; width: 6px; height: 3px; border-radius: 2px; background: #74897f; }
    .apps .current::after { content: ""; position: absolute; bottom: 0; width: 16px; height: 3px; border-radius: 2px; background: #0a78d4; }
    .find { width: 220px; height: 32px; border-radius: 16px; background: #eef8f4; border: 1px solid #b9d8ca; display: flex; align-items: center; gap: 10px; padding: 0 4px 0 10px; font-size: 14px; }
    .find input { flex: 1; min-width: 0; border: 0; background: none; outline: 0; padding: 0; font-size: 14px; }
    .find input::placeholder { color: #4d5652; }
    .tray { display: flex; align-items: center; justify-content: flex-end; padding-right: 18px; }
    .tray button { width: 32px; height: 36px; font-size: 14px; }
    .tray .ime { width: 44px; }
    .tray .vol { width: 17px; }
    .clock { margin-left: 15px; text-align: right; }
  `];

  render() {
    return html`
      <div class="weather">
        <svg class="icon" width="26" height="22" viewBox="0 0 26 22"><defs><linearGradient id="cl" x1="0" y1="0" x2="0" y2="1"><stop offset="0" stop-color="#e6efff"/><stop offset="1" stop-color="#7fa3e6"/></linearGradient></defs><circle cx="18" cy="7" r="6" fill="#f59a23"/><path d="M6 21a5 5 0 0 1-.5-10A6.500 6.500 0 0 1 17.500 9 6 6 0 0 1 20 21z" fill="url(#cl)"/></svg>
        <div>9°C<br />多云</div>
      </div>
      <div class="apps">
        <button aria-label="开始"><svg class="icon" width="24" height="24" viewBox="0 0 24 24"><defs><linearGradient id="wn" x1="0" y1="0" x2="1" y2="1"><stop offset="0" stop-color="#4fd0fb"/><stop offset="1" stop-color="#0467c4"/></linearGradient></defs><path d="M1 0h10.500v11.500H0V1a1 1 0 0 1 1-1zM12.500 0H23a1 1 0 0 1 1 1v10.500H12.500zM0 12.500h11.500V24H1a1 1 0 0 1-1-1zM12.500 12.500H24V23a1 1 0 0 1-1 1H12.500z" fill="url(#wn)"/></svg></button>
        <label class="find"><svg class="icon" width="15" height="15" viewBox="0 0 16 16">${glyphs.search}</svg><input placeholder="搜索" aria-label="搜索" />
          <svg class="icon" width="46" height="24" viewBox="0 0 46 24"><g><path d="M2 12C3 6 10 1 17 3c5 1 5 4 2 5-4 1-5 6-8 9-4 3-9 0-9-5z" fill="#e9b872"/><ellipse cx="11" cy="8" rx="6" ry="4.500" transform="rotate(-35 11 8)" fill="#f6d49b"/><path d="M5 12c5 2 8 0 10-7M11 13l4 8M12 13l9 6" stroke="#d8486a" stroke-width="2.500" fill="none"/><circle cx="19" cy="20" r="2.500" fill="#e76a86"/></g><g><ellipse cx="34.500" cy="18" rx="11" ry="4.500" fill="#7866a3"/><ellipse cx="34.500" cy="16.500" rx="8" ry="3" fill="#b29ad6"/><path d="M27 3h15l-2 13c-3 2-8 2-11 0z" fill="#3d3257"/><path d="M28.400 12c4 2 8 2 12.200 0l-.6 4c-3 2-8 2-11 0z" fill="#7a55b0"/><ellipse cx="34.500" cy="3" rx="7.500" ry="1.800" fill="#5c5077"/></g></svg>
        </label>
        <button aria-label="任务视图"><svg class="icon" width="24" height="24" viewBox="0 0 24 24"><rect x="6.500" y="1" width="17.500" height="16" fill="#f5f5f5"/><rect x="0" y="7" width="18" height="16" fill="#2a2a2a"/><rect x="6.500" y="7" width="11.500" height="10" fill="#b9b9b9"/></svg></button>
        <button aria-label="文件"><svg class="icon" width="24" height="24" viewBox="0 0 24 24"><path d="M0 3a2 2 0 0 1 2-2h7l2 3H22a2 2 0 0 1 2 2v5H0z" fill="#dd9a0b"/><path d="M0 6h9l2-1.500h11a2 2 0 0 1 2 2V21a2 2 0 0 1-2 2H2a2 2 0 0 1-2-2z" fill="#fccb3d"/><path d="M4 23v-4a3 3 0 0 1 3-3h10a3 3 0 0 1 3 3v4z" fill="#1f7fd0"/><path d="M8 19h8" stroke="#0d5ba5" stroke-width="2"/></svg></button>
        <button class="current" aria-label="Edge"><svg class="icon" width="24" height="24" viewBox="0 0 24 24"><defs><linearGradient id="e1" x1="0" y1="0" x2="1" y2=".3"><stop offset="0" stop-color="#1b9de2"/><stop offset="1" stop-color="#5fe05a"/></linearGradient></defs><path d="M.5 11C1 4.500 6 0 12 0c7 0 12 4.500 12 10 0 4-3 6-6.500 6-2.500 0-4-1-3-2.500C16 11 14 7 9.500 7 5.500 7 2 9 .5 11z" fill="url(#e1)"/><path d="M.2 12C1 8.500 5 6.500 9 7.200c-2 .8-4 3.500-3.500 7.300.5 5 4.500 8.500 9 9C6 25 0 19.500.2 12z" fill="#1276d3"/><path d="M9.500 10.500c-3 4-1 10 4.500 10.500 3.500.3 6.500-1 8.500-3-2 4-6 6-9.500 6C8 23 5 19 5.500 14.500 6 12 8 10 9.500 10.500z" fill="#0b4a94"/></svg></button>
        <button aria-label="商店"><svg class="icon" width="24" height="24" viewBox="0 0 24 24"><path d="M7 6V2.500A1.500 1.500 0 0 1 8.500 1h7A1.500 1.500 0 0 1 17 2.500V6" fill="none" stroke="#2fc1ee" stroke-width="2"/><path d="M0 5h24v15a4 4 0 0 1-4 4H4a4 4 0 0 1-4-4z" fill="#14457d"/><path d="M7 9.500h4.500V14H7z" fill="#f25022"/><path d="M12.500 9.500H17V14h-4.500z" fill="#7fba00"/><path d="M7 15h4.500v4.500H7z" fill="#00a4ef"/><path d="M12.500 15H17v4.500h-4.500z" fill="#ffb900"/></svg></button>
        <button class="run" aria-label="计算器"><svg class="icon" width="20" height="24" viewBox="0 0 20 24"><rect width="20" height="24" rx="1.500" fill="#6c7680"/><rect x="2" y="2" width="16" height="4" fill="#45d4f2"/><path d="M2 8h4v4H2zM7.500 8h4v4h-4zM13 8h4.500v4H13zM2 13h4v4H2zM7.500 13h4v4h-4zM2 18h4v4H2zM7.500 18h4v4h-4z" fill="#d4dade"/><path d="M13 13h4.500v9H13z" fill="#0f4c94"/></svg></button>
        <button aria-label="微信"><svg class="icon" width="24" height="24" viewBox="0 0 24 24"><ellipse cx="9" cy="9" rx="9" ry="7.500" fill="#1fd366"/><path d="M3 14l-.5 4 4-2z" fill="#1fd366"/><ellipse cx="17" cy="15.500" rx="7" ry="6" fill="#e6e6e6"/><g fill="#0d6b36"><circle cx="6" cy="7" r="1.100"/><circle cx="12" cy="7" r="1.100"/></g><g fill="#777"><circle cx="14.500" cy="14" r=".9"/><circle cx="19.500" cy="14" r=".9"/></g></svg></button>
        <button class="run" aria-label="Chrome"><svg class="icon" width="24" height="24" viewBox="0 0 24 24"><circle cx="12" cy="12" r="12" fill="#fbc116"/><path d="M12 12 1.600 6A12 12 0 0 1 22.400 6z" fill="#e33b2e"/><path d="M12 12 1.600 6A12 12 0 0 0 12 24l5.200-9z" fill="#229a4a"/><path d="M12 6h10.400L17 12z" fill="#e33b2e"/><path d="M22.400 6A12 12 0 0 1 12 24l5.200-9c1-2 1-6-2-9z" fill="#fbc116"/><circle cx="12" cy="12" r="6" fill="#fff"/><circle cx="12" cy="12" r="4.600" fill="#3b7ded"/></svg></button>
        <button class="run" aria-label="财务"><svg class="icon" width="24" height="24" viewBox="0 0 24 24"><rect width="24" height="24" rx="1.500" fill="#2f5cf0"/><path d="M6.500 3.500 12 9.500l5.500-6M5.500 10.500h13M5.500 15h13M12 9.500V21" fill="none" stroke="#e4ebff" stroke-width="2.200"/></svg></button>
      </div>
      <div class="tray">
        <button aria-label="展开">${icon("trayUp", 14)}</button>
        <button aria-label="同步">${icon("sync", 16)}</button>
        <button aria-label="输入语言">中</button>
        <button class="ime" aria-label="输入法">拼</button>
        <button aria-label="网络">${icon("network")}</button>
        <button class="vol" aria-label="音量">${icon("volume")}</button>
        <div class="clock">9:19<br />2025/12/16</div>
      </div>`;
  }
}

@customElement("app-root")
class AppRoot extends LitElement {
  static styles = [shared, css`
    :host { display: flex; flex-direction: column; height: 100vh; background: #f7f7f7; font-family: "Noto Sans", "Noto Sans CJK SC", sans-serif; font-size: 13px; }
    .page { flex: 1; min-height: 0; display: flex; flex-direction: column; margin: 0 4px 4px; background: #fff; border-radius: 8px; box-shadow: 0 0 2px rgba(0, 0, 0, .35); overflow: hidden; }
    .cards { display: grid; grid-template-columns: repeat(4, 1fr); gap: 18px; padding: 12px 16px 13px; background: #e9eaee; }
    .foot { display: flex; align-items: center; justify-content: flex-end; height: 48px; padding-right: 24px; border-top: 1px solid #e4e5ec; color: #1f2937; }
    .total { padding-right: 16px; line-height: 38px; border-right: 1px solid #d9dce3; }
    .per { padding-left: 16px; display: flex; align-items: center; gap: 4px; color: #1e40af; }
    .per select { appearance: none; border: 0; background: none; padding: 0; color: #1f2937; }
  `];

  render() {
    return html`
      <browser-bar></browser-bar>
      <main class="page">
        <app-header></app-header>
        <div class="cards">
          <stat-card value="20" over="抵店" label="预计抵店客人" foot="筛选条件栏" selected></stat-card>
          <stat-card value="15.69%" over="在店" label="入住率" foot="筛选条件栏"></stat-card>
          <stat-card value="32" over="离店" label="预计离店客人" foot="筛选条件栏"></stat-card>
          <stat-card value="142" over="客房" label="已检查房" foot="统计"></stat-card>
        </div>
        <filter-bar></filter-bar>
        <reservation-table></reservation-table>
        <footer class="foot">
          <span class="total">20 项目</span>
          <label class="per"><select aria-label="每页数量"><option>50 每页</option></select>${icon("caret", 13)}</label>
        </footer>
      </main>
      <task-bar></task-bar>`;
  }
}
